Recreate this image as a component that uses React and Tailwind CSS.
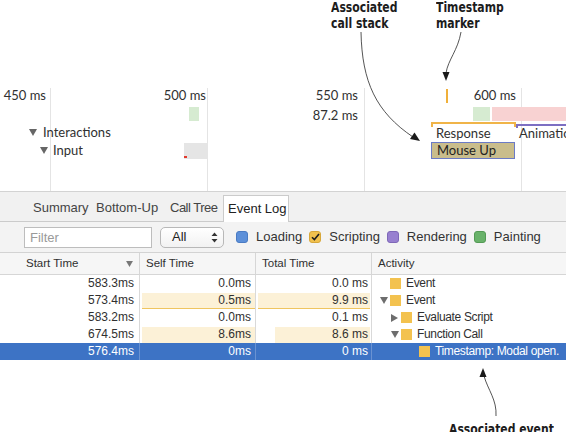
import React from 'react';

// small tree toggles
const Down = ({ className }) => (
  <svg width="8" height="7" viewBox="0 0 8 7" className={className}>
    <path d="M0 0H8L4 7Z" fill="currentColor" />
  </svg>
);
const Right = ({ className }) => (
  <svg width="7" height="8" viewBox="0 0 7 8" className={className}>
    <path d="M0 0L7 4L0 8Z" fill="currentColor" />
  </svg>
);

const rows = [
  { start: '583.3', self: '0.0', total: '0.0', name: 'Event', pad: 'pl-[8px]', toggle: null },
  { start: '573.4', self: '0.5', total: '9.9', name: 'Event', pad: 'pl-[8px]', toggle: 'down', selfBar: 'full', totalBar: 'full', line: true },
  { start: '583.2', self: '0.0', total: '0.1', name: 'Evaluate Script', pad: 'pl-[19px]', toggle: 'right' },
  { start: '674.5', self: '8.6', total: '8.6', name: 'Function Call', pad: 'pl-[19px]', toggle: 'down', selfBar: 'full', totalBar: 'part' },
  { start: '576.4', self: '0', total: '0', name: 'Timestamp: Modal open.', pad: 'pl-[37px]', toggle: null, selected: true },
];

const filters = [
  { label: 'Loading', box: 'bg-[#5d90d9] border-[#4a7bc3]' },
  { label: 'Scripting', box: 'bg-[#f1c14e] border-[#d7a73a]', checked: true },
  { label: 'Rendering', box: 'bg-[#9880d0] border-[#7f68b8]' },
  { label: 'Painting', box: 'bg-[#69b26a] border-[#549a55]' },
];

const annot =
  "absolute origin-top-left scale-x-[0.86] font-['Liberation_Sans_Narrow','DejaVu_Sans_Condensed',sans-serif] font-bold text-[14px] leading-[16px] text-[#1c1c1c] whitespace-nowrap";

function Timeline() {
  return (
    <div className="relative h-[191px] font-['Lato',sans-serif] text-[13px] leading-[16px] text-[#303030]">
      {/* grid */}
      <div className="absolute left-[50px] top-[88px] bottom-0 w-px bg-[#e4e4e4]" />
      <div className="absolute left-[207px] top-[88px] bottom-0 w-px bg-[#e4e4e4]" />
      <div className="absolute left-[364px] top-[88px] bottom-0 w-px bg-[#e4e4e4]" />
      <div className="absolute left-[521px] top-[88px] bottom-0 w-px bg-[#e4e4e4]" />

      <span className="absolute right-[520px] top-[87px]">450 ms</span>
      <span className="absolute right-[360px] top-[87px]">500 ms</span>
      <span className="absolute right-[208px] top-[87px]">550 ms</span>
      <span className="absolute right-[50px] top-[87px]">600 ms</span>
      <span className="absolute right-[208px] top-[107px]">87.2 ms</span>

      {/* track labels */}
      <div className="absolute left-[29px] top-[124px] flex items-center gap-[6px]">
        <Down className="text-[#666]" />
        <span>Interactions</span>
      </div>
      <div className="absolute left-[40px] top-[142px] flex items-center gap-[5px]">
        <Down className="text-[#666]" />
        <span>Input</span>
      </div>

      {/* frames */}
      <div className="absolute left-[189px] top-[107px] w-[10px] h-[14px] bg-[#d6ebd1]" />
      <div className="absolute left-[473px] top-[107px] w-[17px] h-[14px] bg-[#d6ebd1]" />
      <div className="absolute left-[492px] top-[107px] right-0 h-[14px] bg-[#f8d2d2]" />

      {/* timestamp marker */}
      <div className="absolute left-[446px] top-[89px] w-[2px] h-[14px] bg-[#f0b03a]" />

      {/* response / animation brackets */}
      <div className="absolute left-[431px] top-[122px] w-[85px] h-[5px] border-t-2 border-x-2 border-[#f0b448]" />
      <div className="absolute left-[516px] top-[124px] right-0 h-[4px] border-t-2 border-l-2 border-[#7d6fc2]" />
      <span className="absolute left-[436px] top-[125px]">Response</span>
      <span className="absolute left-[519px] top-[125px]">Animation</span>

      <div className="absolute left-[431px] top-[142px] w-[84px] h-[17px] bg-[#c9bd8c] border border-[#6b7bc6] pl-[5px] leading-[15px] text-[#222]">
        Mouse Up
      </div>

      {/* input block */}
      <div className="absolute left-[184px] top-[143px] w-[24px] h-[16px] bg-[#e5e5e5]" />
      <div className="absolute left-[184px] top-[156px] w-[3px] h-[2px] bg-[#e23a2e]" />
    </div>
  );
}

function Panel() {
  return (
    <div className="font-['Liberation_Sans',sans-serif] text-[#333]">
      {/* tabs */}
      <div className="h-[31px] flex items-end pl-[28px] bg-[#f1f1f1] border-t border-[#d3d3d3] border-b border-b-[#cbcbcb] text-[13px]">
        <div className="w-[64px] h-[26px] pl-[5px] leading-[26px] text-[#444]">Summary</div>
        <div className="w-[74px] h-[26px] pl-[4px] leading-[26px] text-[#444]">Bottom-Up</div>
        <div className="w-[57px] h-[26px] pl-[4px] leading-[26px] text-[#444] tracking-[-0.5px] whitespace-nowrap">Call Tree</div>
        <div className="w-[66px] h-[27px] -mb-px pl-[4px] leading-[26px] bg-white border-x border-t border-[#cbcbcb] text-[#222] whitespace-nowrap">
          Event Log
        </div>
      </div>

      {/* toolbar */}
      <div className="h-[31px] flex items-center bg-[#f3f3f3] border-b border-[#d3d3d3] text-[13px]">
        <div className="ml-[24px] w-[128px] h-[21px] bg-white border border-[#bdbdbd] pl-[5px] leading-[19px] text-[#9a9a9a]">
          Filter
        </div>
        <div className="ml-[8px] w-[64px] h-[21px] rounded-[5px] border border-[#b8b8b8] bg-gradient-to-b from-white to-[#f2f2f2] flex items-center justify-between pl-[11px] pr-[5px] text-[#222]">
          <span className="font-medium">All</span>
          <svg width="7" height="11" viewBox="0 0 7 11">
            <path d="M0.5 4L3.5 0.5L6.5 4Z M0.5 7L3.5 10.5L6.5 7Z" fill="#333" />
          </svg>
        </div>
        <div className="ml-[12px] flex items-center gap-[7px]">
          {filters.map((f) => (
            <div key={f.label} className="flex items-center gap-[8px]">
              <div className={`w-[12px] h-[12px] rounded-[3px] border flex items-center justify-center ${f.box}`}>
                {f.checked && (
                  <svg width="9" height="8" viewBox="0 0 9 8">
                    <path d="M1 4.2L3.4 6.6L8 1" stroke="#1f1f1f" strokeWidth="1.6" fill="none" />
                  </svg>
                )}
              </div>
              <span className="text-[#333]">{f.label}</span>
            </div>
          ))}
        </div>
      </div>

      {/* table header */}
      <div className="h-[22px] flex bg-[#f6f6f6] border-b border-[#d6d6d6] text-[11.5px] leading-[21px] text-[#303030]">
        <div className="w-[140px] pl-[26px] pr-[6px] border-r border-[#d6d6d6] flex items-center justify-between">
          <span>Start Time</span>
          <Down className="text-[#777] w-[7px] h-[6px]" />
        </div>
        <div className="w-[116px] pl-[6px] border-r border-[#d6d6d6]">Self Time</div>
        <div className="w-[116px] pl-[6px] border-r border-[#d6d6d6]">Total Time</div>
        <div className="flex-1 pl-[6px]">Activity</div>
      </div>

      {/* rows */}
      {rows.map((r, i) => {
        const sep = r.selected ? 'border-[#6a92d2]' : 'border-[#d9d9d9]';
        return (
          <div
            key={i}
            className={`h-[17px] flex text-[12px] leading-[17px] ${r.selected ? 'bg-[#3d73c5] text-white' : 'text-[#303030]'}`}
          >
            <div className={`w-[140px] border-r ${sep} text-right pr-[5px]`}>{r.start}ms</div>
            <div className={`w-[116px] border-r ${sep} flex`}>
              <div
                className={`flex-1 text-right pr-[4px] ${r.selfBar ? 'ml-[2px] mt-[1px] bg-[#fcf1d7] leading-[15px]' : ''} ${r.line ? 'border-b border-[#efc560]' : ''}`}
              >
                {r.self}ms
              </div>
            </div>
            <div className={`w-[116px] border-r ${sep} flex`}>
              <div
                className={`flex-1 text-right pr-[2px] mr-px ${r.totalBar === 'full' ? 'ml-[2px] mt-[1px] bg-[#fcf1d7] leading-[15px]' : ''} ${r.totalBar === 'part' ? 'ml-[19px] mt-[1px] bg-[#fcf1d7] leading-[15px]' : ''} ${r.line ? 'border-b border-[#efc560]' : ''}`}
              >
                {r.total} ms
              </div>
            </div>
            <div className={`flex-1 flex items-center ${r.pad}`}>
              <div className="w-[10px] flex items-center">
                {r.toggle === 'down' && <Down className={r.selected ? 'text-white' : 'text-[#6d6d6d]'} />}
                {r.toggle === 'right' && <Right className="text-[#6d6d6d]" />}
              </div>
              <div className="w-[11px] h-[11px] bg-[#f3c24f]" />
              <span className="ml-[5px] whitespace-nowrap tracking-[-0.35px]">{r.name}</span>
            </div>
          </div>
        );
      })}
    </div>
  );
}

export default function App() {
  return (
    <div className="relative w-[566px] h-[432px] overflow-hidden bg-white">
      <Timeline />
      <Panel />

      {/* annotations */}
      <div className={`${annot} left-[331px] top-[-1px]`}>
        Associated
        <br />
        call stack
      </div>
      <div className={`${annot} left-[436px] top-[-1px]`}>
        Timestamp
        <br />
        marker
      </div>
      <div className={`${annot} left-[449px] top-[421px]`}>Associated event</div>

      <svg className="absolute inset-0 pointer-events-none" width="566" height="432" viewBox="0 0 566 432">
        <g fill="none" stroke="#2a2a2a" strokeWidth="0.8">
          <path d="M361 32 C362 82 376 112 413 137" />
          <path d="M461 32 C458 50 448 60 446 73" />
          <path d="M496 416 C497 400 488 390 484 376" />
        </g>
        <g fill="#1a1a1a">
          <path d="M420 141 L410 139 L414.5 132.5 Z" />
          <path d="M446 81 L442.5 72 L449.5 72 Z" />
          <path d="M483 368 L479.5 377 L486.5 377 Z" />
        </g>
      </svg>
    </div>
  );
}
